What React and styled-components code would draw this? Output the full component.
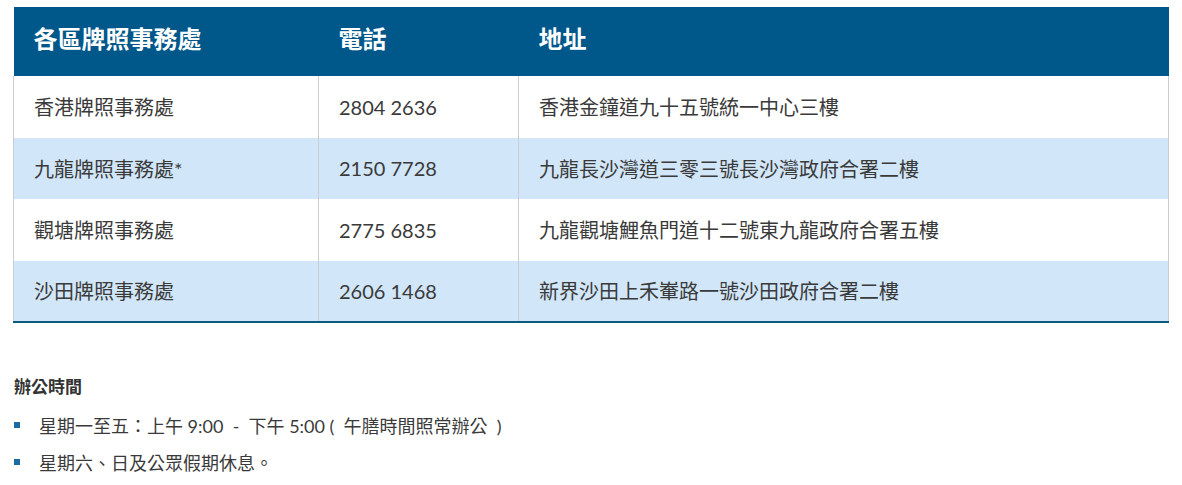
import React from "react";
import styled, { createGlobalStyle } from "styled-components";

const GlobalStyle = createGlobalStyle`
	body {
		margin: 0;
		background: #fff;
		font-family: Lato, "Noto Sans CJK TC", sans-serif;
		color: #333;
	}
`;

const Page = styled.div`
	padding: 7px 13px 0 13px;
	width: 1156px;
`;

const Table = styled.table`
	width: 1156px;
	border-collapse: collapse;
	table-layout: fixed;
	border-bottom: 2px solid #0d5a80;
`;

const HeadCell = styled.th`
	background: #00578a;
	color: #fff;
	text-align: left;
	font-size: 24px;
	font-weight: 700;
	height: 69px;
	padding: 0 0 8px 20px;
	box-sizing: border-box;
	vertical-align: middle;
`;

const Row = styled.tr`
	background: ${p => (p.$striped ? "#d1e6f8" : "#fff")};
`;

const Cell = styled.td`
	font-size: 20px;
	color: #3a3a3a;
	height: 61.5px;
	padding: 0 0 0 20px;
	box-sizing: border-box;
	border-left: 1px solid #c9cdd1;
	border-right: 1px solid #c9cdd1;
	vertical-align: middle;
	white-space: nowrap;
`;

const Hours = styled.section`
	margin-top: 50px;
	padding-left: 1px;
`;

const Title = styled.h3`
	margin: 0 0 8px;
	font-size: 17px;
	font-weight: 700;
	color: #333;
`;

const List = styled.ul`
	list-style: none;
	margin: 0;
	padding: 0;
`;

const Item = styled.li`
	display: flex;
	align-items: center;
	font-size: 18px;
	color: #3a3a3a;
	height: 37px;
	white-space: pre;

	&::before {
		content: "";
		width: 6px;
		height: 6px;
		background: #1b6aa1;
		margin: 0 19px 0 0;
		flex: none;
	}
`;

const offices = [
	{ name: "香港牌照事務處", phone: "2804 2636", addr: "香港金鐘道九十五號統一中心三樓" },
	{ name: "九龍牌照事務處*", phone: "2150 7728", addr: "九龍長沙灣道三零三號長沙灣政府合署二樓" },
	{ name: "觀塘牌照事務處", phone: "2775 6835", addr: "九龍觀塘鯉魚門道十二號東九龍政府合署五樓" },
	{ name: "沙田牌照事務處", phone: "2606 1468", addr: "新界沙田上禾輋路一號沙田政府合署二樓" },
];

const App = () => (
	<Page>
		<GlobalStyle />
		<Table>
			<colgroup>
				<col style={{ width: 305 }} />
				<col style={{ width: 200 }} />
				<col />
			</colgroup>
			<thead>
				<tr>
					<HeadCell>各區牌照事務處</HeadCell>
					<HeadCell>電話</HeadCell>
					<HeadCell>地址</HeadCell>
				</tr>
			</thead>
			<tbody>
				{offices.map((o, i) => (
					<Row key={o.phone} $striped={i % 2 === 1}>
						<Cell>{o.name}</Cell>
						<Cell>{o.phone}</Cell>
						<Cell>{o.addr}</Cell>
					</Row>
				))}
			</tbody>
		</Table>

		<Hours>
			<Title>辦公時間</Title>
			<List>
				<Item>{"星期一至五：上午 9:00  -  下午 5:00 (  午膳時間照常辦公  )"}</Item>
				<Item>星期六、日及公眾假期休息。</Item>
			</List>
		</Hours>
	</Page>
);

export default App;
